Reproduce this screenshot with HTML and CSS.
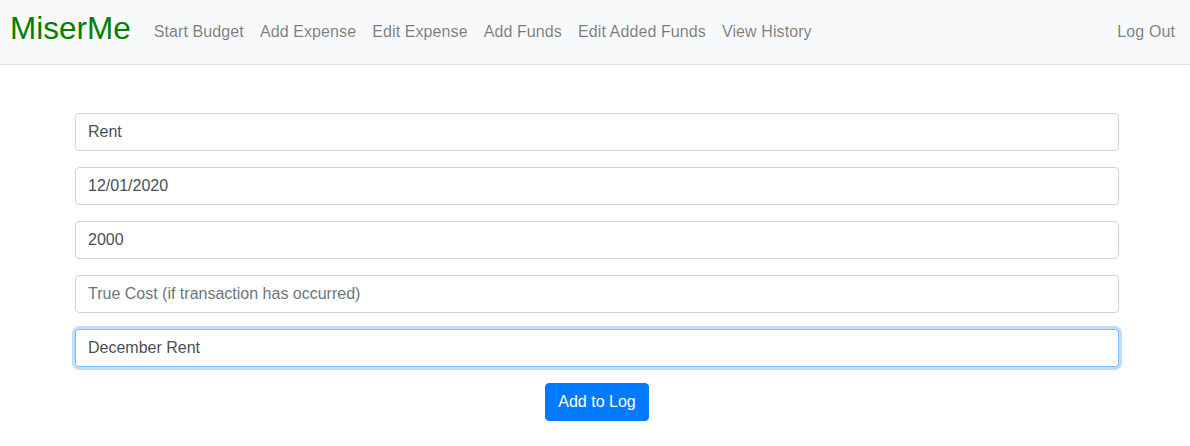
FILE: index.html
```html
<!DOCTYPE html>
<html lang="en">
<head>
<meta charset="utf-8">
<title>MiserMe</title>
<link rel="stylesheet" href="styles.css">
</head>
<body>
<nav class="navbar">
  <a class="brand" href="#">MiserMe</a>
  <ul class="nav-links">
    <li><a href="#">Start Budget</a></li>
    <li><a href="#">Add Expense</a></li>
    <li><a href="#">Edit Expense</a></li>
    <li><a href="#">Add Funds</a></li>
    <li><a href="#">Edit Added Funds</a></li>
    <li><a href="#">View History</a></li>
  </ul>
  <a class="logout" href="#">Log Out</a>
</nav>
<main class="content">
  <form class="expense-form">
    <input class="field" type="text" value="Rent">
    <input class="field" type="text" value="12/01/2020">
    <input class="field" type="text" value="2000">
    <input class="field" type="text" placeholder="True Cost (if transaction has occurred)">
    <input class="field focused" type="text" value="December Rent">
    <div class="actions">
      <button class="btn-primary" type="button">Add to Log</button>
    </div>
  </form>
</main>
</body>
</html>
```
FILE: styles.css
```css
* { box-sizing: border-box; }
html, body { margin: 0; padding: 0; }
body {
  font-family: "Liberation Sans", Arial, sans-serif;
  font-size: 16px;
  line-height: 1.5;
  color: #212529;
  background: #fff;
}
a { text-decoration: none; }

.navbar {
  display: flex;
  align-items: center;
  height: 65px;
  padding: 0 15px 0 10px;
  background: #f8f9fa;
  border-bottom: 1px solid #dee2e6;
}
.brand {
  font-size: 31.5px;
  line-height: 1;
  color: #008000;
  margin-right: 15px;
  margin-top: -7px;
}
.nav-links {
  display: flex;
  list-style: none;
  margin: 0;
  padding: 0;
  flex: 1;
}
.nav-links a, .logout {
  display: block;
  padding: 0 8px;
  color: rgba(0, 0, 0, 0.5);
  font-size: 16px;
  letter-spacing: 0.1px;
}
.logout { padding-right: 0; }

.content {
  padding: 48px 71px 0 75px;
}
.expense-form {
  display: flex;
  flex-direction: column;
  gap: 16px;
}
.field {
  display: block;
  width: 100%;
  height: 38px;
  padding: 6px 12px;
  font-family: inherit;
  font-size: 16px;
  line-height: 1.5;
  color: #495057;
  background: #fff;
  border: 1px solid #ced4da;
  border-radius: 4px;
  outline: none;
}
.field::placeholder { color: #6c757d; opacity: 1; }
.field.focused {
  border-color: #80bdff;
  box-shadow: 0 0 0 3px rgba(0, 123, 255, 0.25);
}
.actions {
  display: flex;
  justify-content: center;
}
.btn-primary {
  height: 38px;
  padding: 6px 12px;
  font-family: inherit;
  font-size: 16px;
  line-height: 1.5;
  color: #fff;
  background: #007bff;
  border: 1px solid #007bff;
  border-radius: 4px;
}
```
